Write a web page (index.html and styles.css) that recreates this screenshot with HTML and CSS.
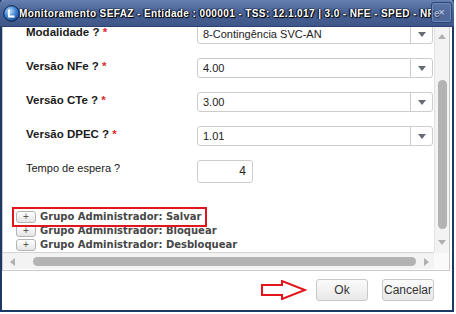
FILE: index.html
```html
<!DOCTYPE html>
<html lang="pt-BR">
<head>
  <meta charset="UTF-8">
  <title>Monitoramento SEFAZ</title>
  <link rel="stylesheet" href="styles.css">
</head>
<body>

<div class="dialog">
  <div class="titlebar">
    <svg class="app-icon" width="17" height="17" viewBox="0 0 17 17">
      <defs>
        <radialGradient id="orb" cx="0.4" cy="0.35" r="0.7">
          <stop offset="0" stop-color="#bfe0ff"/>
          <stop offset="0.55" stop-color="#3f82d0"/>
          <stop offset="1" stop-color="#173f80"/>
        </radialGradient>
      </defs>
      <circle cx="8.5" cy="8.5" r="7.8" fill="url(#orb)" stroke="#0d2550" stroke-width="1"/>
      <path d="M6 4.5 L6 11.5 L11.5 11.5" fill="none" stroke="#ffffff" stroke-width="1.8"/>
    </svg>
    <span class="title">Monitoramento SEFAZ - Entidade : 000001 - TSS: 12.1.017 | 3.0 - NFE - SPED - NFe</span>
    <div class="close">×</div>
  </div>

  <div class="panel">
    <div class="viewport">
      <div class="form">
        <div class="field">
          <div class="label strong">Modalidade ? <span class="req">*</span></div>
          <div class="select"><span class="value">8-Contingência SVC-AN</span><span class="drop"></span></div>
        </div>
        <div class="field">
          <div class="label strong">Versão NFe ? <span class="req">*</span></div>
          <div class="select"><span class="value">4.00</span><span class="drop"></span></div>
        </div>
        <div class="field">
          <div class="label strong">Versão CTe ? <span class="req">*</span></div>
          <div class="select"><span class="value">3.00</span><span class="drop"></span></div>
        </div>
        <div class="field">
          <div class="label strong">Versão DPEC ? <span class="req">*</span></div>
          <div class="select"><span class="value">1.01</span><span class="drop"></span></div>
        </div>
        <div class="field">
          <div class="label">Tempo de espera ?</div>
          <div class="input">4</div>
        </div>
      </div>

      <ul class="tree">
        <li><span class="expander">+</span>Grupo Administrador: Salvar</li>
        <li><span class="expander">+</span>Grupo Administrador: Bloquear</li>
        <li><span class="expander">+</span>Grupo Administrador: Desbloquear</li>
      </ul>

      <div class="highlight"></div>
    </div>

    <div class="vscroll">
      <span class="arrow up"></span>
      <div class="vtrack"><div class="vthumb"></div></div>
      <span class="arrow down"></span>
    </div>

    <div class="hscroll">
      <span class="arrow left"></span>
      <div class="hthumb"></div>
      <span class="arrow right"></span>
    </div>
    <div class="corner"></div>
  </div>

  <div class="footer">
    <svg class="pointer" width="46" height="20" viewBox="0 0 46 20">
      <polygon points="1,5 21,5 21,1 44,10 21,19 21,15 1,15" fill="none" stroke="#e3141c" stroke-width="2"/>
    </svg>
    <div class="btn">Ok</div>
    <div class="btn">Cancelar</div>
  </div>
</div>

</body>
</html>
```

FILE: styles.css
```css
body { margin: 0; background: #fff; font-family: "Liberation Sans", Arial, sans-serif; }

.dialog { width: 454px; height: 312px; box-sizing: border-box; border: 2px solid #1d3865; border-top: 0; background: #fff; display: flex; flex-direction: column; }

/* barra de titulo */
.titlebar { height: 27px; flex: none; margin: 0 -2px; display: flex; align-items: center; padding-left: 3px; border-radius: 4px 4px 0 0; background: linear-gradient(#6680b2, #4a6397 45%, #3e5687); border-bottom: 1px solid #2a4273; box-sizing: border-box; overflow: hidden; }
.app-icon { flex: none; margin-right: -1px; position: relative; z-index: 1; }
.title { flex: 1; min-width: 0; white-space: nowrap; overflow: hidden; color: #fff; font-weight: bold; font-size: 10px; letter-spacing: 0.4px; text-shadow: 0 0 2px #000, 1px 1px 1px #000, -1px 0 1px #000; }
.close { flex: none; position: relative; width: 19px; height: 19px; margin: 0 2px 2px -14px; border: 1px solid #2b4578; border-radius: 3px; box-shadow: inset 0 0 0 1px #7088b8; background: rgba(90, 115, 165, 0.55); color: #c9d3e6; font-size: 11px; line-height: 18px; text-align: center; }

/* area com rolagem */
.panel { flex: none; height: 243px; margin-right: 2px; display: grid; grid-template-columns: 431px 15px; grid-template-rows: 225px 17px; border: 1px solid #c9c9c9; border-top: 0; }
.viewport { position: relative; overflow: hidden; }
.form { margin-top: -3px; padding-left: 23px; }
.field { display: grid; grid-template-columns: 171px 236px; height: 34px; }
.label { font-size: 11px; line-height: 16px; color: #1a1a1a; }
.label.strong { font-weight: bold; font-size: 11.5px; }
.req { color: #e0252b; }

.select { height: 20px; box-sizing: border-box; border: 1px solid #cdcdcd; border-radius: 3px; display: flex; font-size: 11px; color: #222; }
.select .value { flex: 1; padding-left: 5px; line-height: 18px; white-space: nowrap; overflow: hidden; }
.select .drop { width: 21px; border-left: 1px solid #cdcdcd; display: flex; align-items: center; justify-content: center; }
.select .drop::after { content: ""; border-left: 4px solid transparent; border-right: 4px solid transparent; border-top: 5px solid #666b75; }

.input { width: 56px; height: 23px; box-sizing: border-box; border: 1px solid #cdcdcd; border-radius: 3px; font-size: 12px; line-height: 21px; text-align: right; padding-right: 6px; color: #222; }

.tree { list-style: none; margin: 17px 0 0; padding: 0 0 0 13px; }
.tree li { height: 14px; display: flex; align-items: flex-start; font-family: "DejaVu Sans", Verdana, sans-serif; font-weight: bold; font-size: 10px; line-height: 12px; color: #474747; white-space: nowrap; }
.expander { width: 20px; height: 12px; margin-right: 4px; box-sizing: border-box; border: 1px solid #b4b4b4; border-radius: 3px; background: linear-gradient(#ffffff, #e4e4e4); font-family: "Liberation Sans", Arial, sans-serif; font-weight: normal; font-size: 10px; line-height: 10px; text-align: center; color: #555; }

.highlight { position: absolute; left: 9px; top: 180px; width: 195px; height: 20px; box-sizing: border-box; border: 2px solid #e3141c; }

/* barras de rolagem */
.vscroll { border-left: 1px solid #e2e2e2; background: #f3f3f3; display: flex; flex-direction: column; align-items: center; }
.vtrack { flex: 1; width: 100%; display: flex; justify-content: center; padding-top: 41px; padding-bottom: 10px; box-sizing: border-box; }
.vthumb { width: 9px; height: 149px; border-radius: 5px; background: #b3b3b3; }
.hscroll { border-top: 1px solid #d4d4d4; background: #f3f3f3; display: flex; align-items: center; padding: 0 5px 0 7px; }
.hthumb { width: 383px; height: 9px; margin: 1px 8px 0 18px; border-radius: 5px; background: #b3b3b3; }
.corner { border-top: 1px solid #f3f3f3; background: #fafafa; }

.arrow { width: 0; height: 0; flex: none; }
.arrow.up { margin-top: 7px; border-left: 4px solid transparent; border-right: 4px solid transparent; border-bottom: 5px solid #b0b0b0; }
.arrow.down { margin-bottom: 7px; border-left: 4px solid transparent; border-right: 4px solid transparent; border-top: 5px solid #b0b0b0; }
.arrow.left { margin-top: 1px; border-top: 4px solid transparent; border-bottom: 4px solid transparent; border-right: 5px solid #b0b0b0; }
.arrow.right { margin-top: 1px; border-top: 4px solid transparent; border-bottom: 4px solid transparent; border-left: 5px solid #b0b0b0; }

/* rodape */
.footer { flex: 1; display: flex; justify-content: flex-end; align-items: flex-start; gap: 14px; padding: 8px 18px 0 0; }
.pointer { margin: 1px -5px 0 0; }
.btn { width: 52px; height: 22px; box-sizing: border-box; border: 1px solid #c8c8c8; border-radius: 3px; background: linear-gradient(#fbfbfb, #e8e8e8); font-size: 12px; line-height: 20px; text-align: center; color: #333; }
```
